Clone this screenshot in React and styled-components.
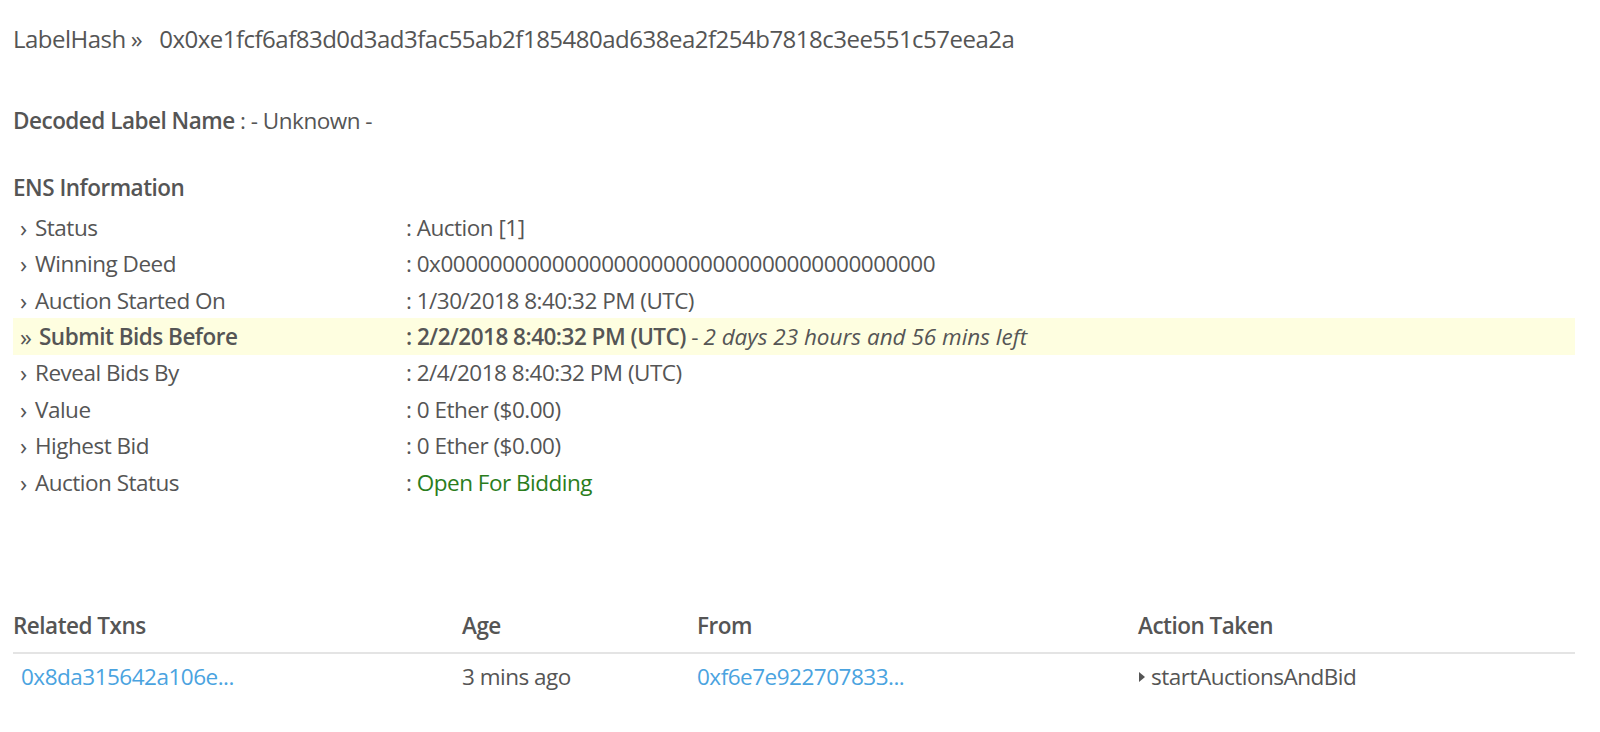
import React from "react";
import styled, { createGlobalStyle } from "styled-components";

const GlobalStyle = createGlobalStyle`
  html, body {
    margin: 0;
    padding: 0;
    background: #fff;
  }
  body {
    font-family: "Open Sans", "Liberation Sans", sans-serif;
    font-size: 22.5px;
    letter-spacing: -0.5px;
    color: #555;
  }
`;

const Page = styled.div`
  padding: 21px 25px 30px 13px;
`;

const Title = styled.div`
  line-height: 36px;
  font-size: 24px;
  white-space: nowrap;
  color: #555;
`;

const TitleSep = styled.span`
  margin: 0 17px 0 5px;
`;

const Decoded = styled.div`
  line-height: 36px;
  margin-top: 46px;
`;

const Strong = styled.span`
  font-weight: 600;
`;

const SectionTitle = styled.div`
  line-height: 36px;
  margin-top: 31px;
  font-weight: 600;
`;

const InfoList = styled.div`
  margin-top: 3px;
  display: flex;
  flex-direction: column;
`;

const InfoRow = styled.div`
  display: grid;
  grid-template-columns: 393px 1fr;
  height: 36.43px;
  align-items: center;
  background: ${(p) => (p.$active ? "#fefee0" : "transparent")};
  font-weight: ${(p) => (p.$active ? 600 : 400)};
`;

const Label = styled.div`
  padding-left: 7px;
  display: flex;
  align-items: center;
  white-space: nowrap;
`;

const Chevron = styled.span`
  display: inline-block;
  width: ${(p) => (p.$double ? 19 : 15)}px;
  font-size: 24px;
  font-weight: 400;
  color: #555;
`;

const Value = styled.div`
  white-space: nowrap;
  color: #555;
`;

const Muted = styled.span`
  font-weight: 400;
`;

const Italic = styled.span`
  font-weight: 400;
  font-style: italic;
  letter-spacing: 0;
`;

const Green = styled.span`
  color: #2a7d1c;
`;

const Table = styled.div`
  margin-top: 103px;
`;

const TableRow = styled.div`
  display: grid;
  grid-template-columns: 449px 235px 441px 1fr;
  line-height: 36px;
  padding: ${(p) => (p.$head ? "5px 0 8px" : "5px 0")};
  border-bottom: ${(p) => (p.$head ? "2px solid #e4e4e4" : "none")};
  font-weight: ${(p) => (p.$head ? 600 : 400)};
`;

const Cell = styled.div`
  white-space: nowrap;
  padding-left: ${(p) => p.$indent || 0}px;
  display: flex;
  align-items: center;
`;

const Link = styled.a`
  color: #4aa3df;
  text-decoration: none;
`;

const Caret = () => (
  <svg width="8" height="12" viewBox="0 0 8 12" style={{ marginRight: 5 }}>
    <path d="M1 1 L7 6 L1 11 Z" fill="#555" />
  </svg>
);

const rows = [
  { label: "Status", value: ": Auction [1]" },
  { label: "Winning Deed", value: ": 0x0000000000000000000000000000000000000000" },
  { label: "Auction Started On", value: ": 1/30/2018 8:40:32 PM (UTC)" },
  { label: "Submit Bids Before", active: true },
  { label: "Reveal Bids By", value: ": 2/4/2018 8:40:32 PM (UTC)" },
  { label: "Value", value: ": 0 Ether ($0.00)" },
  { label: "Highest Bid", value: ": 0 Ether ($0.00)" },
  { label: "Auction Status", green: true },
];

const App = () => {
  return (
    <Page>
      <GlobalStyle />
      <Title>
        LabelHash<TitleSep>»</TitleSep>0x0xe1fcf6af83d0d3ad3fac55ab2f185480ad638ea2f254b7818c3ee551c57eea2a
      </Title>
      <Decoded>
        <Strong>Decoded Label Name</Strong> : - Unknown -
      </Decoded>
      <SectionTitle>ENS Information</SectionTitle>
      <InfoList>
        {rows.map((r) => (
          <InfoRow key={r.label} $active={r.active}>
            <Label>
              <Chevron $double={r.active}>{r.active ? "»" : "›"}</Chevron>
              {r.label}
            </Label>
            {r.active ? (
              <Value>
                : 2/2/2018 8:40:32 PM (UTC) <Muted>- </Muted>
                <Italic>2 days 23 hours and 56 mins left</Italic>
              </Value>
            ) : r.green ? (
              <Value>
                : <Green>Open For Bidding</Green>
              </Value>
            ) : (
              <Value>{r.value}</Value>
            )}
          </InfoRow>
        ))}
      </InfoList>
      <Table>
        <TableRow $head>
          <Cell>Related Txns</Cell>
          <Cell>Age</Cell>
          <Cell>From</Cell>
          <Cell>Action Taken</Cell>
        </TableRow>
        <TableRow>
          <Cell $indent={8}>
            <Link href="#">0x8da315642a106e...</Link>
          </Cell>
          <Cell>3 mins ago</Cell>
          <Cell>
            <Link href="#">0xf6e7e922707833...</Link>
          </Cell>
          <Cell>
            <Caret />
            startAuctionsAndBid
          </Cell>
        </TableRow>
      </Table>
    </Page>
  );
};

export default App;
